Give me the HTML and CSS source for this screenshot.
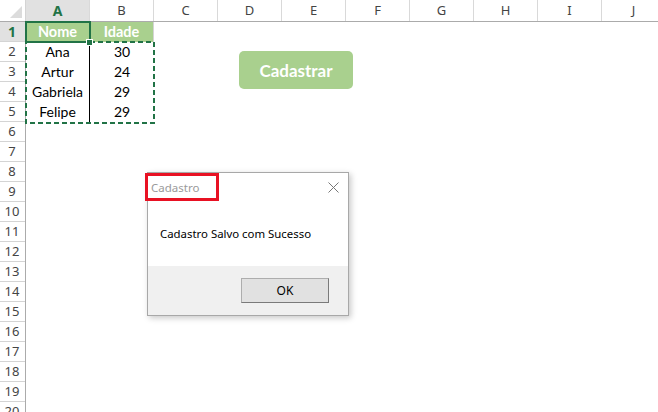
FILE: index.html
```html
<!DOCTYPE html>
<html lang="pt">
<head>
<meta charset="utf-8">
<title>Cadastro</title>
<link rel="stylesheet" href="styles.css">
</head>
<body>
<div class="app">
  <div class="colheads">
    <div class="corner"><span class="tri"></span></div>
    <div class="ch sel">A</div>
    <div class="ch">B</div>
    <div class="ch">C</div>
    <div class="ch">D</div>
    <div class="ch">E</div>
    <div class="ch">F</div>
    <div class="ch">G</div>
    <div class="ch">H</div>
    <div class="ch">I</div>
    <div class="ch">J</div>
  </div>
  <div class="main">
    <div class="rowheads">
      <div class="rh sel">1</div>
      <div class="rh">2</div>
      <div class="rh">3</div>
      <div class="rh">4</div>
      <div class="rh">5</div>
      <div class="rh">6</div>
      <div class="rh">7</div>
      <div class="rh">8</div>
      <div class="rh">9</div>
      <div class="rh">10</div>
      <div class="rh">11</div>
      <div class="rh">12</div>
      <div class="rh">13</div>
      <div class="rh">14</div>
      <div class="rh">15</div>
      <div class="rh">16</div>
      <div class="rh">17</div>
      <div class="rh">18</div>
      <div class="rh">19</div>
      <div class="rh">20</div>
    </div>
    <div class="sheet">
      <div class="row">
        <div class="cell head">Nome</div>
        <div class="cell head">Idade</div>
      </div>
      <div class="row">
        <div class="cell a">Ana</div>
        <div class="cell">30</div>
      </div>
      <div class="row">
        <div class="cell a">Artur</div>
        <div class="cell">24</div>
      </div>
      <div class="row">
        <div class="cell a">Gabriela</div>
        <div class="cell">29</div>
      </div>
      <div class="row">
        <div class="cell a">Felipe</div>
        <div class="cell">29</div>
      </div>

      <svg class="ants" width="130" height="83" viewBox="0 0 130 83">
        <rect x="1" y="1" width="128" height="81" fill="none" stroke="#217346" stroke-width="2" stroke-dasharray="5 3"/>
      </svg>
      <div class="selection"></div>
      <div class="handle"></div>

      <button class="cadastrar">Cadastrar</button>
    </div>
  </div>

  <div class="dialog">
    <div class="titlebar">
      <span class="title">Cadastro</span>
      <svg class="close" width="11" height="11" viewBox="0 0 11 11">
        <path d="M0.5 0.5 L10.5 10.5 M10.5 0.5 L0.5 10.5" stroke="#777" stroke-width="1" fill="none"/>
      </svg>
    </div>
    <div class="msg">Cadastro Salvo com Sucesso</div>
    <div class="footer">
      <button class="ok">OK</button>
    </div>
    <div class="highlight"></div>
  </div>
</div>
</body>
</html>
```

FILE: styles.css
```css
* { box-sizing: border-box; }
html, body { margin: 0; padding: 0; background: #fff; overflow: hidden; }
.app {
  position: relative;
  width: 658px;
  height: 412px;
  overflow: hidden;
  font-family: "Noto Sans", "Open Sans", sans-serif;
}
.colheads {
  display: flex;
  height: 22px;
  border-bottom: 1px solid #ababab;
  background: #fff;
}
.corner {
  position: relative;
  width: 26px;
  flex: none;
  border-right: 1px solid #d4d4d4;
}
.tri {
  position: absolute;
  right: 3px;
  bottom: 3px;
  width: 0;
  height: 0;
  border-left: 12px solid transparent;
  border-bottom: 12px solid #dcdcdc;
}
.ch {
  width: 64px;
  flex: none;
  border-right: 1px solid #d9d9d9;
  text-align: center;
  font-size: 13px;
  line-height: 21px;
  color: #444;
}
.ch.sel {
  background: #e1e1e1;
  color: #217346;
  font-weight: bold;
  font-size: 14px;
}
.main { display: flex; }
.rowheads {
  width: 26px;
  flex: none;
  border-right: 1px solid #ababab;
}
.rh {
  height: 20px;
  border-bottom: 1px solid #d4d4d4;
  text-align: center;
  font-size: 13px;
  line-height: 19px;
  color: #444;
  padding-right: 1px;
}
.rh.sel {
  background: #e1e1e1;
  color: #217346;
  font-weight: bold;
  font-size: 14px;
}
.sheet {
  position: relative;
  flex: 1;
  font-family: "Lato", "Liberation Sans", sans-serif;
}
.row { display: flex; height: 20px; }
.cell {
  width: 64px;
  flex: none;
  text-align: center;
  font-size: 14px;
  line-height: 20px;
  color: #000;
}
.cell.a { border-right: 1px solid #000; }
.cell.head {
  background: #a9d08e;
  color: #fff;
  font-weight: bold;
  font-size: 14.5px;
  border-right: 1px solid #d4d4d4;
}
.ants {
  position: absolute;
  left: -1px;
  top: 19px;
}
.selection {
  position: absolute;
  left: -1px;
  top: -1px;
  width: 66px;
  height: 22px;
  border: 2px solid #217346;
}
.handle {
  position: absolute;
  left: 60px;
  top: 17px;
  width: 7px;
  height: 7px;
  background: #217346;
  border: 1px solid #fff;
}
.cadastrar {
  position: absolute;
  left: 213px;
  top: 29px;
  width: 114px;
  height: 38px;
  border: none;
  border-radius: 5px;
  background: #a9d08e;
  color: #fff;
  font-family: "Lato", sans-serif;
  font-weight: bold;
  font-size: 17px;
  padding: 0;
}
.dialog {
  position: absolute;
  left: 147px;
  top: 172px;
  width: 202px;
  height: 144px;
  background: #fff;
  border: 1px solid #a8a8a8;
  box-shadow: 2px 2px 6px rgba(0, 0, 0, 0.22);
  display: flex;
  flex-direction: column;
  font-family: "Noto Sans", "Open Sans", sans-serif;
}
.titlebar {
  height: 29px;
  display: flex;
  align-items: center;
  justify-content: space-between;
  padding: 0 9px 0 3px;
}
.title {
  font-size: 11.5px;
  color: #9a9a9a;
}
.close { display: block; }
.msg {
  height: 64px;
  padding: 24px 0 0 12px;
  font-size: 11.4px;
  line-height: 16px;
  color: #000;
}
.footer {
  flex: 1;
  background: #f0f0f0;
  display: flex;
  justify-content: flex-end;
  align-items: flex-start;
  padding: 12px 19px 0 0;
}
.ok {
  width: 88px;
  height: 25px;
  background: #e1e1e1;
  border: 1px solid #adadad;
  border-right-color: #7a7a7a;
  border-bottom-color: #7a7a7a;
  font-family: "Noto Sans", "Open Sans", sans-serif;
  font-size: 12px;
  color: #000;
  padding: 0;
}
.highlight {
  position: absolute;
  left: -3px;
  top: 0;
  width: 74px;
  height: 28px;
  border: 3px solid #e81123;
}
```
